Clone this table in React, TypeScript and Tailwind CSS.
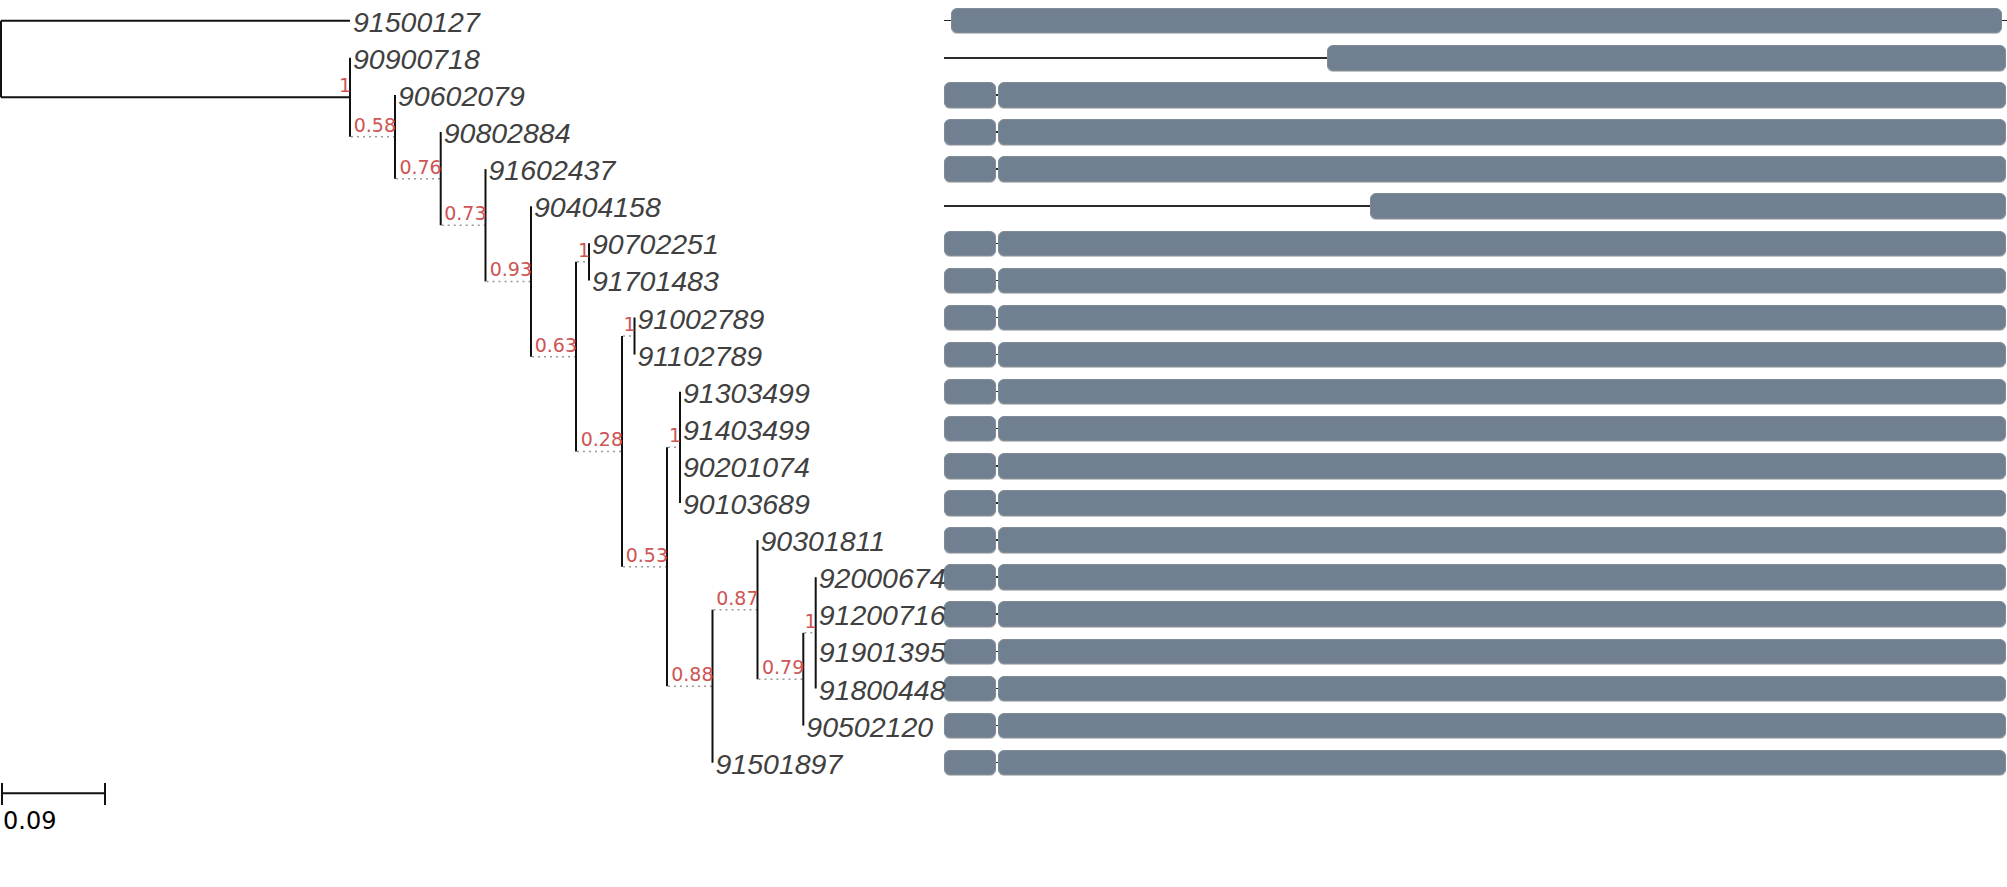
import React from 'react'

type Node = { x: number; kids: (Node | number)[]; label?: string; solid?: boolean }

const ROW0 = 20.7
const ROW_H = 37.1
const leafY = (i: number) => ROW0 + ROW_H * i

const LEAVES = [
  '91500127', '90900718', '90602079', '90802884', '91602437', '90404158', '90702251',
  '91701483', '91002789', '91102789', '91303499', '91403499', '90201074', '90103689',
  '90301811', '92000674', '91200716', '91901395', '91800448', '90502120', '91501897',
]

// tree, leaves referenced by row index
const O: Node = { x: 815.7, kids: [15, 16, 17, 18], label: '1' }
const N: Node = { x: 803.3, kids: [O, 19], label: '0.79' }
const M: Node = { x: 757.5, kids: [14, N], label: '0.87' }
const L: Node = { x: 712.5, kids: [M, 20], label: '0.88' }
const K: Node = { x: 680, kids: [10, 11, 12, 13], label: '1' }
const J: Node = { x: 667, kids: [K, L], label: '0.53' }
const I: Node = { x: 634.5, kids: [8, 9], label: '1' }
const H: Node = { x: 622, kids: [I, J], label: '0.28' }
const G: Node = { x: 589, kids: [6, 7], label: '1' }
const F: Node = { x: 576, kids: [G, H], label: '0.63' }
const E: Node = { x: 531, kids: [5, F], label: '0.93' }
const D: Node = { x: 485.5, kids: [4, E], label: '0.73' }
const C: Node = { x: 440.7, kids: [3, D], label: '0.76' }
const B: Node = { x: 395, kids: [2, C], label: '0.58' }
const A: Node = { x: 350, kids: [1, B], label: '1', solid: true }
const ROOT: Node = { x: 1, kids: [0, A] }

const yOf = (n: Node | number): number =>
  typeof n === 'number' ? leafY(n) : (yOf(n.kids[0]) + yOf(n.kids[n.kids.length - 1])) / 2

function Branches({ node, parentX }: { node: Node; parentX?: number }) {
  const y = yOf(node)
  const top = yOf(node.kids[0])
  const bottom = yOf(node.kids[node.kids.length - 1])
  return (
    <g>
      {parentX !== undefined &&
        (node.solid ? (
          <line x1={parentX} y1={y} x2={node.x} y2={y} stroke="#111" strokeWidth={2} />
        ) : (
          <line x1={parentX + 1} y1={y} x2={node.x} y2={y} stroke="#999" strokeWidth={1.5} strokeDasharray="2 4" />
        ))}
      <line x1={node.x} y1={top} x2={node.x} y2={bottom} stroke="#111" strokeWidth={2} />
      {node.label && (
        <text x={node.x + 1} y={y - 5} textAnchor="end"
          className="font-['DejaVu_Sans',sans-serif] text-[19px] fill-[#cd5555]">
          {node.label}
        </text>
      )}
      {node.kids.map((k, idx) =>
        typeof k === 'number' ? (
          <g key={idx}>
            {node === ROOT && (
              <line x1={node.x} y1={leafY(k)} x2={A.x} y2={leafY(k)} stroke="#111" strokeWidth={2} />
            )}
            <text x={(node === ROOT ? A.x : node.x) + 3} y={leafY(k) + 11}
              className="font-['Liberation_Sans',Arial,sans-serif] italic text-[28.5px] fill-[#404040]">
              {LEAVES[k]}
            </text>
          </g>
        ) : (
          <Branches key={idx} node={k} parentX={node.x} />
        )
      )}
    </g>
  )
}

type Seg = { k: 'line' | 'bar'; w: number }
const SPLIT: Seg[] = [{ k: 'bar', w: 52 }, { k: 'line', w: 2 }, { k: 'bar', w: 1008 }]
const ROWS: Seg[][] = LEAVES.map((_, i) => {
  if (i === 0) return [{ k: 'line', w: 7 }, { k: 'bar', w: 1051 }, { k: 'line', w: 5 }]
  if (i === 1) return [{ k: 'line', w: 383 }, { k: 'bar', w: 679 }]
  if (i === 5) return [{ k: 'line', w: 426 }, { k: 'bar', w: 636 }]
  return SPLIT
})

export default function App() {
  return (
    <div className="w-[2007px] h-[887px] bg-white flex overflow-hidden">
      {/* tree */}
      <svg width={944} height={887} className="flex-none overflow-visible relative z-10">
        <Branches node={ROOT} />
        {/* scale bar */}
        <g stroke="#111" strokeWidth={2}>
          <line x1={2} y1={793.3} x2={105} y2={793.3} />
          <line x1={2} y1={783} x2={2} y2={805} />
          <line x1={105} y1={783} x2={105} y2={805} />
        </g>
        <text x={3} y={829} className="font-['DejaVu_Sans',sans-serif] text-[24px] fill-black">0.09</text>
      </svg>

      {/* alignment */}
      <div className="flex flex-col pt-[2.15px] w-[1063px] flex-none">
        {ROWS.map((segs, i) => (
          <div key={i} className="h-[37.1px] flex items-center">
            {segs.map((s, j) =>
              s.k === 'bar' ? (
                <div key={j} className="flex-none h-[25.5px] rounded-[6px] bg-[#708090] border border-[#7f8b97] shadow-[0_1px_0_#c4c4c4]"
                  style={{ width: s.w }} />
              ) : (
                <div key={j} className="flex-none h-[1.5px] bg-[#2a2a2a]" style={{ width: s.w }} />
              )
            )}
          </div>
        ))}
      </div>
    </div>
  )
}
